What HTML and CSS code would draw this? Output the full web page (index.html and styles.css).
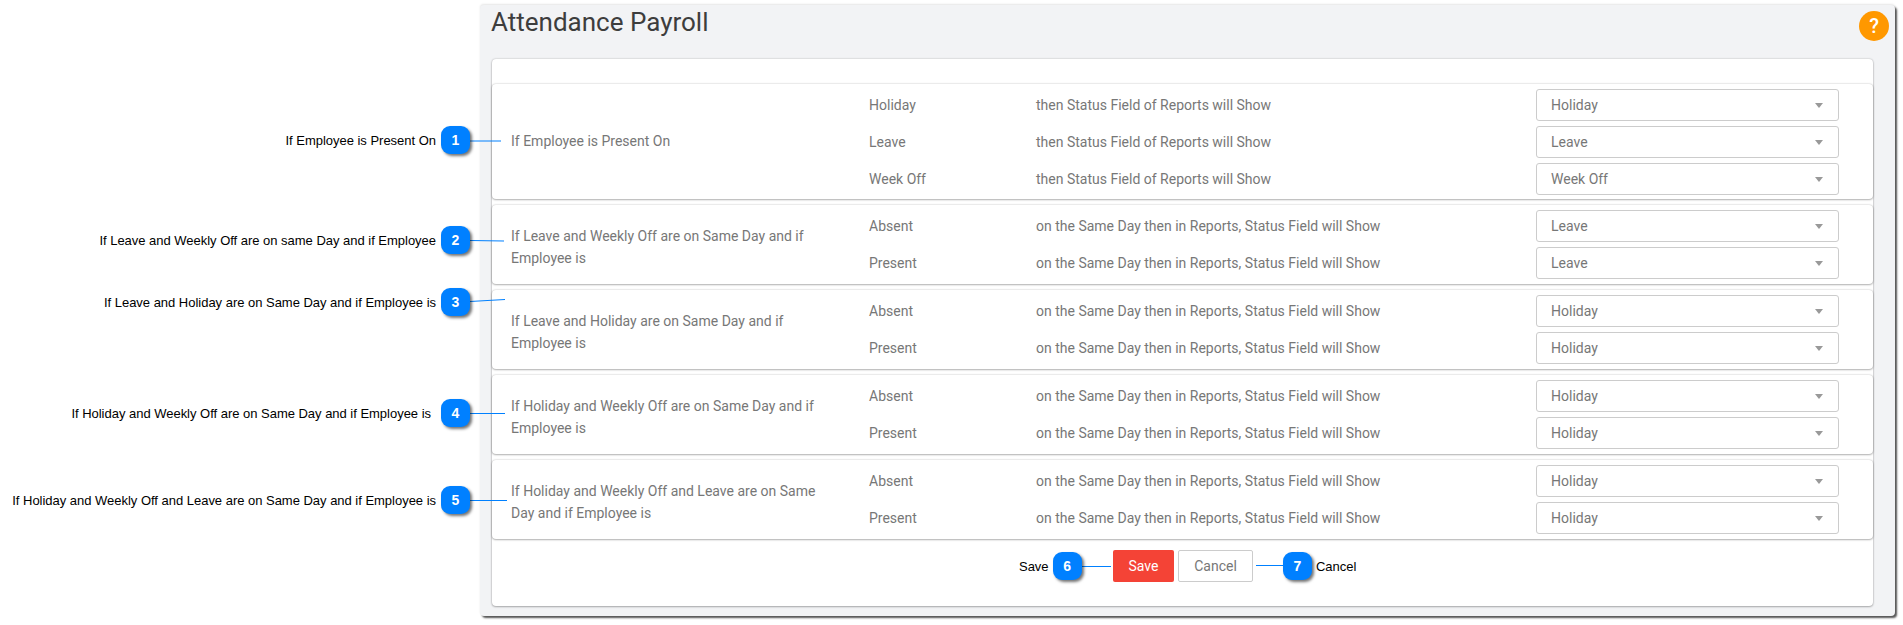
FILE: index.html
```html
<!DOCTYPE html>
<html lang="en">
<head>
  <meta charset="UTF-8" />
  <title>Attendance Payroll</title>
  <link rel="stylesheet" href="styles.css">
</head>
<body>

  <div class="panel">

    <div class="panel-head">
      <h1 class="title">Attendance Payroll</h1>
      <div class="help">?</div>
    </div>

    <div class="card">
      <div class="card-top"></div>

      <div class="group group-first">
        <div class="group-label single">If Employee is Present On</div>
        <div class="group-rows">
          <div class="row">
            <span class="row-name">Holiday</span>
            <span class="row-text">then Status Field of Reports will Show</span>
            <div class="select-box">Holiday<span class="arrow"></span></div>
          </div>
          <div class="row">
            <span class="row-name">Leave</span>
            <span class="row-text">then Status Field of Reports will Show</span>
            <div class="select-box">Leave<span class="arrow"></span></div>
          </div>
          <div class="row">
            <span class="row-name">Week Off</span>
            <span class="row-text">then Status Field of Reports will Show</span>
            <div class="select-box">Week Off<span class="arrow"></span></div>
          </div>
        </div>
      </div>

      <div class="group">
        <div class="group-label">If Leave and Weekly Off are on Same Day and if Employee is</div>
        <div class="group-rows">
          <div class="row">
            <span class="row-name">Absent</span>
            <span class="row-text">on the Same Day then in Reports, Status Field will Show</span>
            <div class="select-box">Leave<span class="arrow"></span></div>
          </div>
          <div class="row">
            <span class="row-name">Present</span>
            <span class="row-text">on the Same Day then in Reports, Status Field will Show</span>
            <div class="select-box">Leave<span class="arrow"></span></div>
          </div>
        </div>
      </div>

      <div class="group">
        <div class="group-label">If Leave and Holiday are on Same Day and if Employee is</div>
        <div class="group-rows">
          <div class="row">
            <span class="row-name">Absent</span>
            <span class="row-text">on the Same Day then in Reports, Status Field will Show</span>
            <div class="select-box">Holiday<span class="arrow"></span></div>
          </div>
          <div class="row">
            <span class="row-name">Present</span>
            <span class="row-text">on the Same Day then in Reports, Status Field will Show</span>
            <div class="select-box">Holiday<span class="arrow"></span></div>
          </div>
        </div>
      </div>

      <div class="group">
        <div class="group-label">If Holiday and Weekly Off are on Same Day and if Employee is</div>
        <div class="group-rows">
          <div class="row">
            <span class="row-name">Absent</span>
            <span class="row-text">on the Same Day then in Reports, Status Field will Show</span>
            <div class="select-box">Holiday<span class="arrow"></span></div>
          </div>
          <div class="row">
            <span class="row-name">Present</span>
            <span class="row-text">on the Same Day then in Reports, Status Field will Show</span>
            <div class="select-box">Holiday<span class="arrow"></span></div>
          </div>
        </div>
      </div>

      <div class="group">
        <div class="group-label">If Holiday and Weekly Off and Leave are on Same Day and if Employee is</div>
        <div class="group-rows">
          <div class="row">
            <span class="row-name">Absent</span>
            <span class="row-text">on the Same Day then in Reports, Status Field will Show</span>
            <div class="select-box">Holiday<span class="arrow"></span></div>
          </div>
          <div class="row">
            <span class="row-name">Present</span>
            <span class="row-text">on the Same Day then in Reports, Status Field will Show</span>
            <div class="select-box">Holiday<span class="arrow"></span></div>
          </div>
        </div>
      </div>

      <div class="actions">
        <button class="btn btn-save">Save</button>
        <button class="btn btn-cancel">Cancel</button>
      </div>
    </div>

  </div>

  <!-- Annotations drawn over the screenshot -->
  <svg class="lines" width="1903" height="625" viewBox="0 0 1903 625">
    <path d="M470 141H501" />
    <path d="M470 240.500L504 241" />
    <path d="M470 301.500L505 299.500" />
    <path d="M470 413.500H505" />
    <path d="M470 500.500H507" />
    <path d="M1080 566.500H1111" />
    <path d="M1256 565.500H1284" />
  </svg>

  <div class="callout c1"><span>If Employee is Present On</span><b class="badge">1</b></div>
  <div class="callout c2"><span>If Leave and Weekly Off are on same Day and if Employee</span><b class="badge">2</b></div>
  <div class="callout c3"><span>If Leave and Holiday are on Same Day and if Employee is</span><b class="badge">3</b></div>
  <div class="callout c4"><span>If Holiday and Weekly Off are on Same Day and if Employee is</span><b class="badge">4</b></div>
  <div class="callout c5"><span>If Holiday and Weekly Off and Leave are on Same Day and if Employee is</span><b class="badge">5</b></div>
  <div class="callout c6"><span>Save</span><b class="badge">6</b></div>
  <div class="callout c7"><b class="badge">7</b><span>Cancel</span></div>

</body>
</html>
```
FILE: styles.css
```css
body {
  box-sizing: border-box;
  height: 625px;
  margin: 0;
  padding-top: 5px;
  background: #fff;
  font-family: Roboto, "Liberation Sans", sans-serif;
  font-size: 14px;
  color: #777;
}

.panel {
  box-sizing: border-box;
  width: 1415px;
  height: 611px;
  margin-left: 480px;
  padding: 0 22px 0 12px;
  background: #f2f3f5;
  border-radius: 4px;
  box-shadow: 2px 2px 2px #555, 0 -1px 2px #e6e6e6;
}

.panel-head {
  display: flex;
  justify-content: space-between;
  height: 54px;
  margin-right: -16px;
}

.title {
  margin: 1px 0 0 -1px;
  font-size: 26px;
  font-weight: 400;
  line-height: 32px;
  color: #3d3d3d;
}

.help {
  width: 30px;
  height: 30px;
  margin-top: 6px;
  border-radius: 50%;
  background: #ff9800;
  color: #fff;
  font-size: 20px;
  font-weight: 500;
  line-height: 30px;
  text-align: center;
}

.card {
  height: 547px;
  background: #fff;
  border-radius: 4px;
  box-shadow: 0 0 2px rgba(0, 0, 0, 0.25), 0 1px 2px rgba(0, 0, 0, 0.25);
}

.card-top {
  height: 25px;
}

.group {
  display: flex;
  box-sizing: border-box;
  margin-bottom: 6px;
  padding: 5px 34px 5px 19px;
  background: #fff;
  border-radius: 4px;
  box-shadow: 0 0 2px rgba(0, 0, 0, 0.25), 0 1px 2px rgba(0, 0, 0, 0.25);
}

.group-first {
  padding-bottom: 4px;
}

.group-label {
  align-self: center;
  box-sizing: border-box;
  width: 358px;
  padding: 4px 40px 0 0;
  line-height: 22px;
}

.group-label.single {
  padding-top: 0;
  padding-bottom: 3px;
}

.group-rows {
  display: flex;
  flex-direction: column;
  gap: 5px;
  flex: 1;
}

.row {
  display: flex;
  align-items: center;
  height: 32px;
}

.row-name {
  width: 167px;
}

.row-text {
  flex: 1;
}

.select-box {
  position: relative;
  box-sizing: border-box;
  width: 303px;
  height: 32px;
  padding-left: 14px;
  border: 1px solid #ccc;
  border-radius: 3px;
  background: #fff;
  line-height: 31px;
}

.arrow {
  position: absolute;
  top: 13px;
  right: 15px;
  border-top: 5px solid #999;
  border-left: 4px solid transparent;
  border-right: 4px solid transparent;
}

.actions {
  display: flex;
  gap: 4px;
  margin-top: 11px;
  padding-left: 621px;
}

.btn {
  height: 32px;
  padding: 0;
  border-radius: 2px;
  font-family: inherit;
  font-size: 14px;
}

.btn-save {
  width: 61px;
  border: none;
  background: #f44336;
  color: #fff;
}

.btn-cancel {
  width: 75px;
  border: 1px solid #ccc;
  background: #fff;
  color: #777;
}

.lines {
  position: absolute;
  top: 0;
  left: 0;
  pointer-events: none;
}

.lines path {
  fill: none;
  stroke: #0080ff;
  stroke-width: 1;
}

.callout {
  position: absolute;
  display: flex;
  align-items: center;
  gap: 5px;
  font-family: "Liberation Sans", Arial, sans-serif;
  font-size: 13px;
  letter-spacing: -0.02px;
  color: #000;
  white-space: nowrap;
}

.badge {
  width: 29px;
  height: 28px;
  border-radius: 9px;
  background: #0080ff;
  box-shadow: 2px 2px 3px rgba(0, 0, 0, 0.55);
  color: #fff;
  font-size: 14px;
  line-height: 28px;
  text-align: center;
}

.c1, .c2, .c3, .c4, .c5 {
  right: 1433px;
}

.c1 { top: 126px; }
.c2 { top: 226px; }
.c3 { top: 288px; }
.c4 { top: 399px; gap: 10px; }
.c5 { top: 486px; }
.c6 { top: 552px; left: 1019px; gap: 4px; }
.c7 { top: 552px; left: 1283px; gap: 4px; }
```
